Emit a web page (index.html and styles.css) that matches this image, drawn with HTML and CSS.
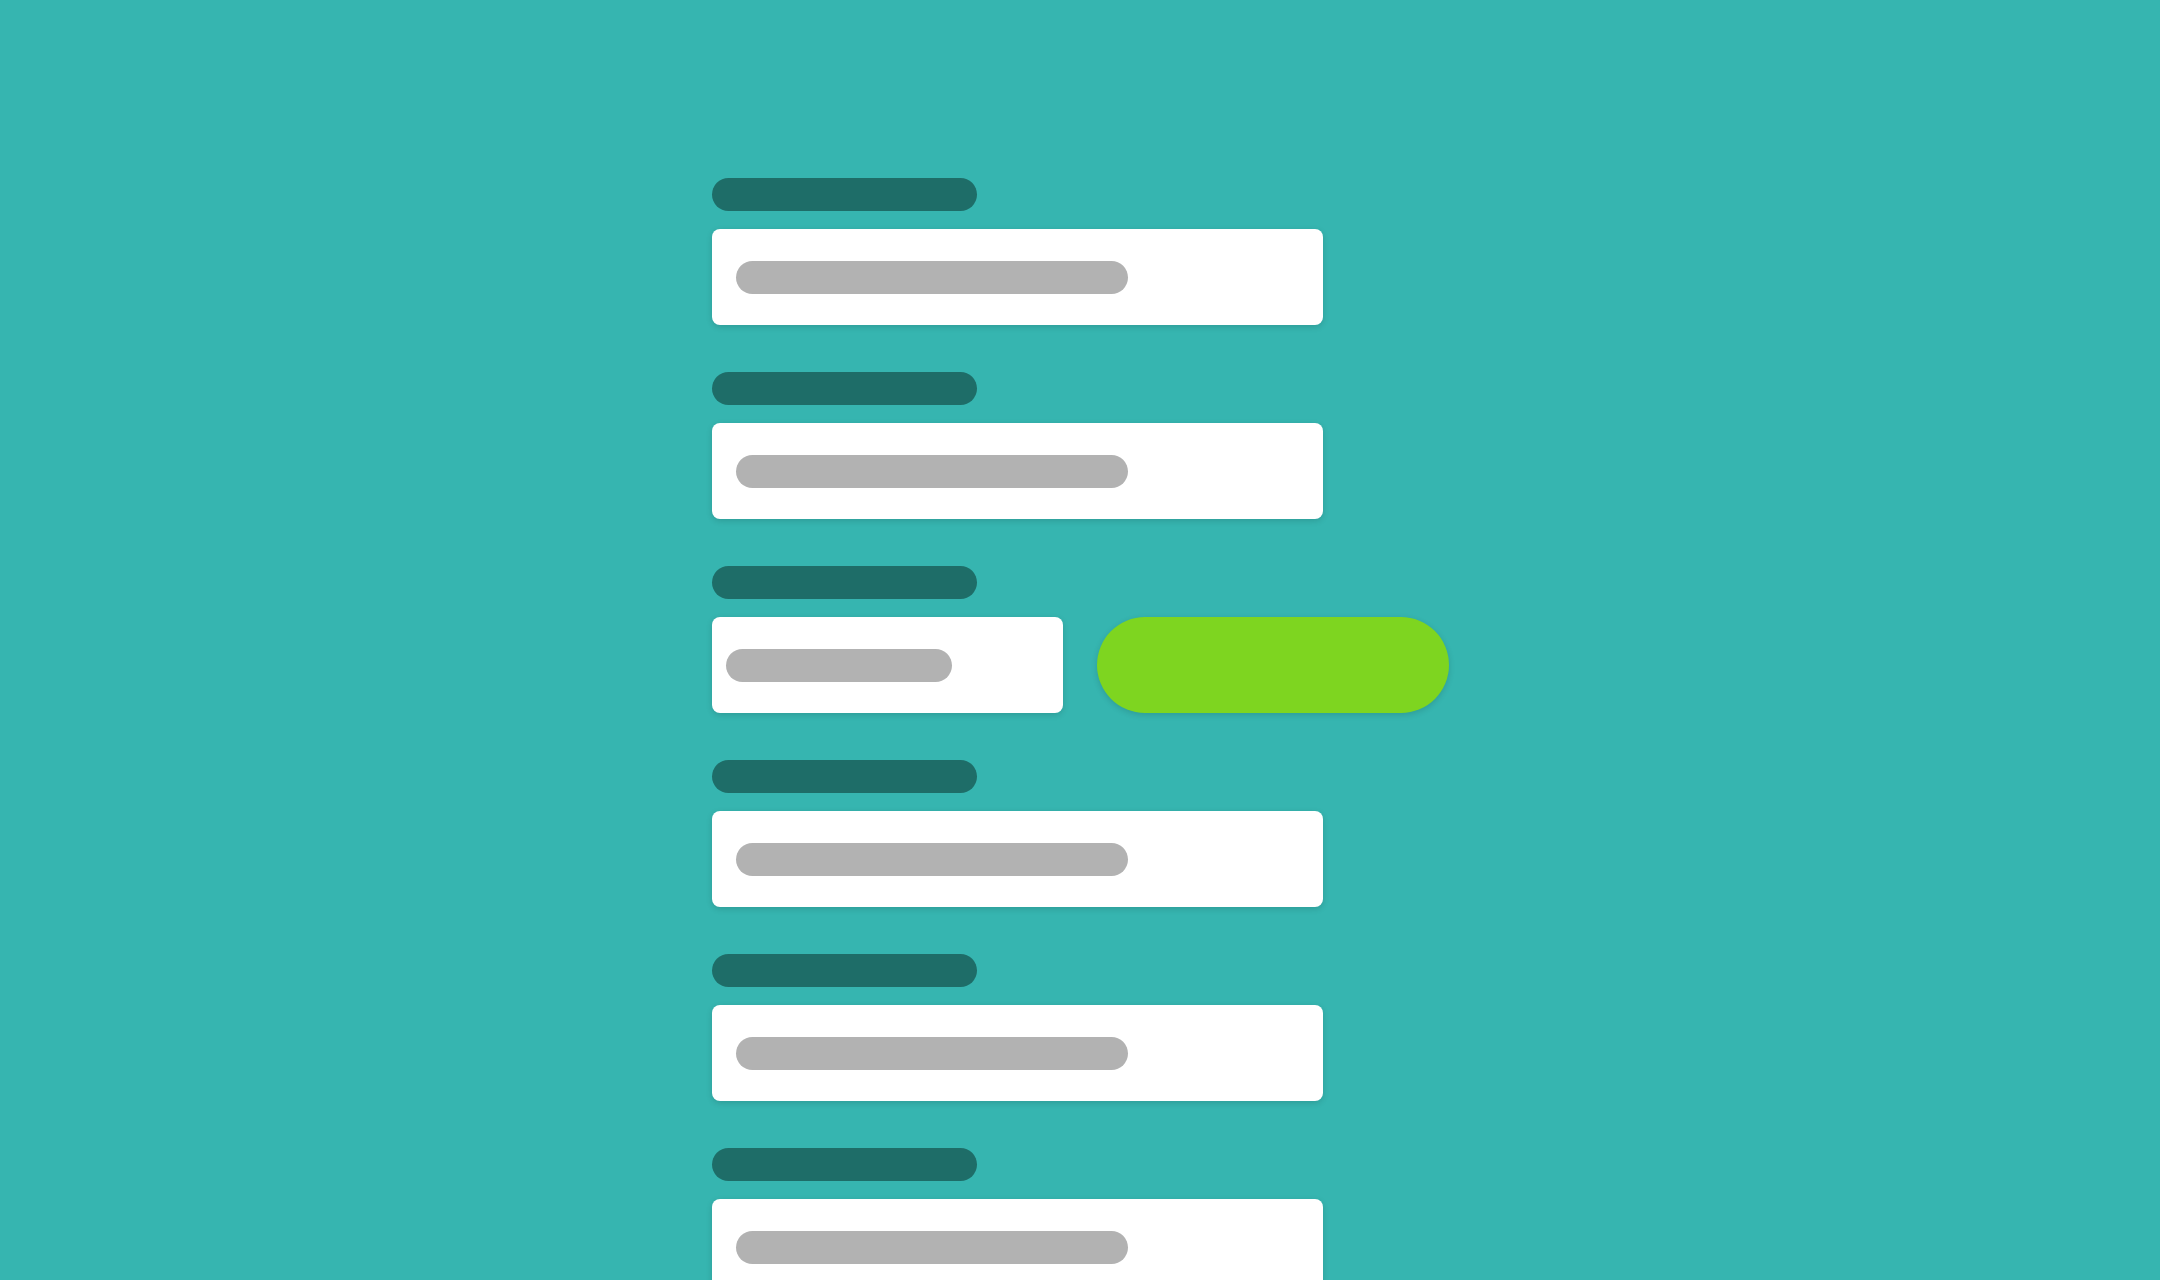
FILE: index.html
```html
<!DOCTYPE html>
<html lang="en">
<head>
    <meta charset="UTF-8">
    <meta name="viewport" content="width=device-width, initial-scale=1.0">
    <title>Form skeleton</title>
    <link rel="stylesheet" href="styles.css">
</head>
<body>
    <div id="form-skeleton">
        <!-- FIELD 1 -->
        <div class="field">
            <div class="label-bar"></div>
            <div class="input-box">
                <div class="value-bar"></div>
            </div>
        </div>
        <!-- FIELD 2 -->
        <div class="field">
            <div class="label-bar"></div>
            <div class="input-box">
                <div class="value-bar"></div>
            </div>
        </div>
        <!-- FIELD 3 WITH BUTTON -->
        <div class="field">
            <div class="label-bar"></div>
            <div class="input-row">
                <div class="input-box short">
                    <div class="value-bar"></div>
                </div>
                <div class="submit-pill"></div>
            </div>
        </div>
        <!-- FIELD 4 -->
        <div class="field">
            <div class="label-bar"></div>
            <div class="input-box">
                <div class="value-bar"></div>
            </div>
        </div>
        <!-- FIELD 5 -->
        <div class="field">
            <div class="label-bar"></div>
            <div class="input-box">
                <div class="value-bar"></div>
            </div>
        </div>
        <!-- FIELD 6 -->
        <div class="field">
            <div class="label-bar"></div>
            <div class="input-box">
                <div class="value-bar"></div>
            </div>
        </div>
    </div>
</body>
</html>
```

FILE: styles.css
```css
*{
    margin:0;
    box-sizing: border-box;
}
body{
    margin: 0;
    padding:0;
    background-color: #36b5b0;
    height:100vh;
    overflow: hidden;
    font-family: "Liberation Sans", Arial, sans-serif;
}
/* FORM */
#form-skeleton{
    display: flex;
    flex-direction: column;
    gap: 47px;
    padding-top: 178px;
    margin-left: 712px;
}
.field{
    display: flex;
    flex-direction: column;
    gap: 18px;
}
.label-bar{
    width: 265px;
    height: 33px;
    border-radius: 17px;
    background-color: #1e6d68;
}
/* INPUTS */
.input-box{
    display: flex;
    align-items: center;
    width: 611px;
    height: 96px;
    padding-left: 24px;
    background-color: white;
    border-radius: 8px;
    box-shadow: 0 2px 6px rgba(0, 0, 0, 0.14);
}
.value-bar{
    width: 392px;
    height: 33px;
    border-radius: 17px;
    background-color: #b2b2b2;
}
.input-row{
    display: flex;
    gap: 34px;
}
.input-box.short{
    width: 351px;
    padding-left: 14px;
}
.input-box.short .value-bar{
    width: 226px;
}
/* BUTTON */
.submit-pill{
    width: 352px;
    height: 96px;
    border-radius: 48px;
    background-color: #7ed520;
    box-shadow: 0 2px 6px rgba(0, 0, 0, 0.14);
}
```
